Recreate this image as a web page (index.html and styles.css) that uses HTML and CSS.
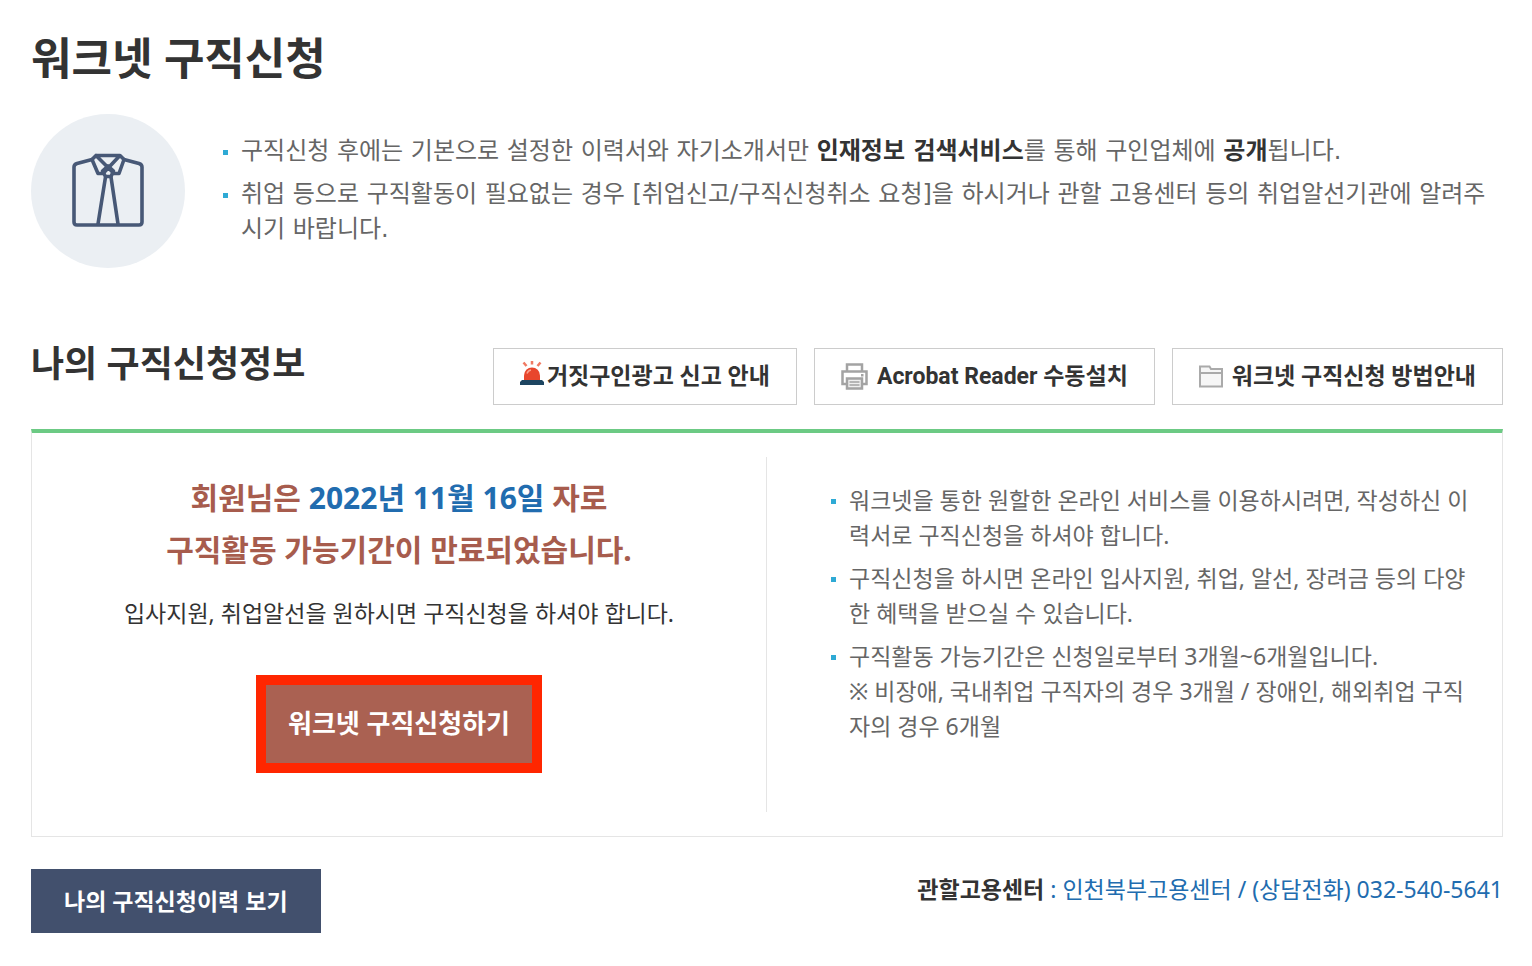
FILE: index.html
```html
<!DOCTYPE html>
<html lang="ko">
<head>
    <meta charset="utf-8">
    <title>워크넷 구직신청</title>
    <link rel="stylesheet" href="styles.css">
</head>
<body>

<div class="wrap">
    <h1 class="page-title">워크넷 구직신청</h1>

    <div class="intro">
        <svg class="intro-icon" viewBox="0 0 154 154" aria-hidden="true">
            <circle cx="77" cy="77" r="77" fill="#ebeff3"/>
            <g fill="none" stroke="#475876" stroke-width="3.6" stroke-linejoin="round" stroke-linecap="round">
                <path d="M61 45.500L46 49.500Q43 50.500 43 53V108Q43 111 46 111H108Q111 111 111 108V53Q111 50.500 108 49.500L93 45.500"/>
                <path d="M65 41.500H89L93 45.500L88 59.500H83L66 42.500M65 41.500L61 45.500L67 59.500H72L88 42.500"/>
                <path d="M77 52L82.500 57L80 62.500H74.500L71.500 57Z"/>
                <path d="M74.500 63L67 110M80 63L87 110"/>
            </g>
        </svg>
        <ul class="bul-list intro-list">
            <li>구직신청 후에는 기본으로 설정한 이력서와 자기소개서만 <strong>인재정보 검색서비스</strong>를 통해 구인업체에 <strong>공개</strong>됩니다.</li>
            <li>취업 등으로 구직활동이 필요없는 경우 [취업신고/구직신청취소 요청]을 하시거나 관할 고용센터 등의 취업알선기관에 알려주시기 바랍니다.</li>
        </ul>
    </div>

    <div class="section-head">
        <h2 class="section-title">나의 구직신청정보</h2>
        <div class="btn-group">
            <a href="#" class="btn-line">
                <svg class="ico-siren" width="24" height="25" viewBox="0 0 24 25" aria-hidden="true">
                    <path d="M3.500 1.500L6.500 5M12 0V3.500M20.500 1.500L17.500 5" stroke="#f07a63" stroke-width="2.500" fill="none"/>
                    <path d="M4 19V14.500a8 8 0 0 1 16 0V19z" fill="#e8462d"/>
                    <path d="M7 12.500Q8 9.500 11 9" stroke="#f9a391" stroke-width="1.500" fill="none"/>
                    <path d="M2 19H22L24 21V24H0V21Z" fill="#1d4561"/>
                </svg>거짓구인광고 신고 안내</a>
            <a href="#" class="btn-line">
                <svg class="ico" width="27" height="27" viewBox="0 0 27 27" aria-hidden="true">
                    <g fill="#fff" stroke="#a3a3a3" stroke-width="2.500">
                        <path d="M6 9V1.500H21V9"/>
                        <path d="M1.500 8.500H25.500V21H1.500Z"/>
                        <path d="M6 15.500H21V25.500H6Z" fill="#eee"/>
                        <path d="M8.500 19H18.500M8.500 22H18.500" stroke-width="1.500"/>
                    </g>
                    <path d="M20 11h2.500v2.500H20z" fill="#a3a3a3"/>
                </svg>Acrobat Reader 수동설치</a>
            <a href="#" class="btn-line">
                <svg class="ico" width="24" height="23" viewBox="0 0 24 23" aria-hidden="true">
                    <path d="M1 21.500V1.500H10.500L12 4H23V21.500Z" fill="#f6f6f6" stroke="#aaa" stroke-width="2"/>
                    <path d="M1 8H23" stroke="#aaa" stroke-width="2"/>
                </svg>워크넷 구직신청 방법안내</a>
        </div>
    </div>

    <div class="info-box">
        <div class="info-status">
            <p class="status-msg">회원님은 <span class="date">2022년 11월 16일</span> 자로<br>구직활동 가능기간이 만료되었습니다.</p>
            <p class="status-desc">입사지원, 취업알선을 원하시면 구직신청을 하셔야 합니다.</p>
            <button type="button" class="btn-apply">워크넷 구직신청하기</button>
        </div>
        <div class="info-guide">
            <ul class="bul-list guide-list">
                <li>워크넷을 통한 원할한 온라인 서비스를 이용하시려면, 작성하신 이력서로 구직신청을 하셔야 합니다.</li>
                <li>구직신청을 하시면 온라인 입사지원, 취업, 알선, 장려금 등의 다양한 혜택을 받으실 수 있습니다.</li>
                <li>구직활동 가능기간은 신청일로부터 3개월~6개월입니다.<br>※ 비장애, 국내취업 구직자의 경우 3개월 / 장애인, 해외취업 구직자의 경우 6개월</li>
            </ul>
        </div>
    </div>

    <div class="bottom">
        <a href="#" class="btn-history">나의 구직신청이력 보기</a>
        <p class="center-info"><strong>관할고용센터</strong> : 인천북부고용센터 / (상담전화) 032-540-5641</p>
    </div>
</div>

</body>
</html>
```
FILE: styles.css
```css
body {
    margin:0;
    background:#fff;
    color:#333;
    font:normal 23px/35px "Noto Sans","Noto Sans CJK KR",sans-serif;
}

h1, h2, p, ul {
    margin:0;
    padding:0;
}

a {
    color:inherit;
    text-decoration:none;
}

.wrap {
    padding:28px 29px 32px 31px;
}

.page-title {
    font-size:44px;
    line-height:60px;
}

/* intro */
.intro {
    display:flex;
    gap:38px;
    margin-top:26px;
}

.intro-icon {
    flex:none;
    width:154px;
    height:154px;
}

.bul-list {
    list-style:none;
    color:#666;
}

.bul-list li {
    position:relative;
    padding-left:18px;
}

.bul-list li + li {
    margin-top:8px;
}

.bul-list li:before {
    content:"";
    position:absolute;
    left:0;
    top:16px;
    width:5px;
    height:5px;
    background:#2eaad5;
}

.bul-list strong {
    color:#333;
}

.intro-list {
    flex:1;
    padding:20px 8px 0 0;
    font-family:"DejaVu Sans","Noto Sans CJK KR",sans-serif;
    font-size:24px;
}

/* section head */
.section-head {
    display:flex;
    justify-content:space-between;
    margin-top:72px;
}

.section-title {
    font-size:36px;
    line-height:48px;
}

.btn-group {
    display:flex;
    gap:17px;
    padding-top:8px;
}

.btn-line {
    display:flex;
    align-items:center;
    box-sizing:border-box;
    height:57px;
    padding:0 26px;
    border:1px solid #ccc;
    font-family:Roboto,"Noto Sans CJK KR",sans-serif;
    font-weight:bold;
}

.btn-line .ico {
    margin-right:9px;
}

.btn-line .ico-siren {
    margin:0 3px 6px 0;
}

/* info box */
.info-box {
    display:flex;
    margin-top:24px;
    padding:24px 0;
    border:1px solid #e5e5e5;
    border-top:4px solid #6cca84;
}

.info-status, .info-guide {
    width:50%;
    box-sizing:border-box;
}

.info-status {
    padding:15px 0 39px;
    border-right:1px solid #e5e5e5;
    text-align:center;
}

.status-msg {
    color:#a75c4d;
    font-size:30px;
    font-weight:bold;
    line-height:52px;
}

.status-msg .date {
    color:#216caf;
}

.status-desc {
    margin-top:20px;
}

.btn-apply {
    margin-top:44px;
    height:98px;
    padding:0 22px 2px;
    border:10px solid #ff2600;
    background:#aa6152;
    color:#fff;
    font:bold 26px/36px "Noto Sans","Noto Sans CJK KR",sans-serif;
}

.info-guide {
    padding:26px 26px 0 64px;
}

/* bottom */
.bottom {
    display:flex;
    justify-content:space-between;
    margin-top:32px;
}

.btn-history {
    padding:0 33px;
    background:#42506d;
    color:#fff;
    font-weight:bold;
    line-height:64px;
}

.center-info {
    padding-top:3px;
    color:#216caf;
}

.center-info strong {
    color:#333;
}
```
